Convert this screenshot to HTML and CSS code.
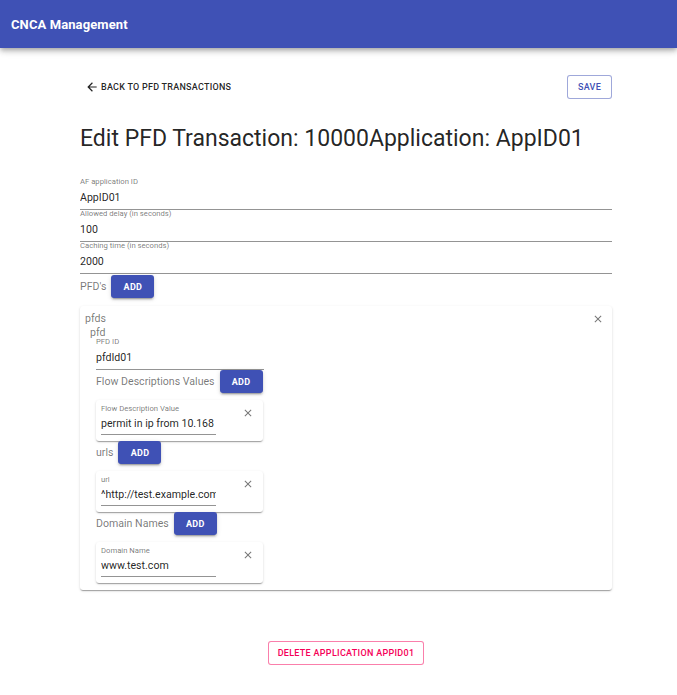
FILE: index.html
```html
<!DOCTYPE html>
<html>
<head>
<meta charset="utf-8">
<link rel="stylesheet" href="styles.css">
</head>
<body>
<header class="appbar"><span class="brand">CNCA Management</span></header>
<main class="content">
  <div class="toprow">
    <a class="back"><svg class="back-icon" viewBox="0 0 24 24"><path d="M20 11H7.83l5.59-5.59L12 4l-8 8 8 8 1.41-1.41L7.83 13H20v-2z"/></svg>BACK TO PFD TRANSACTIONS</a>
    <button class="btn-outlined save">SAVE</button>
  </div>
  <h1 class="title">Edit PFD Transaction: 10000Application: AppID01</h1>

  <div class="field"><div class="label">AF application ID</div><div class="value">AppID01</div></div>
  <div class="field"><div class="label">Allowed delay (in seconds)</div><div class="value">100</div></div>
  <div class="field"><div class="label">Caching time (in seconds)</div><div class="value">2000</div></div>

  <div class="addrow"><span class="addlabel">PFD's</span><button class="btn-add">ADD</button></div>

  <section class="card outer">
    <div class="card-head">
      <span class="section-title">pfds</span>
      <svg class="close" viewBox="0 0 24 24"><path d="M19 6.41 17.59 5 12 10.59 6.41 5 5 6.41 10.59 12 5 17.59 6.41 19 12 13.41 17.59 19 19 17.59 13.41 12z"/></svg>
    </div>
    <div class="pfd">
      <div class="section-title sub">pfd</div>
      <div class="pfd-body">
        <div class="field narrow"><div class="label">PFD ID</div><div class="value">pfdId01</div></div>

        <div class="addrow"><span class="addlabel">Flow Descriptions Values</span><button class="btn-add">ADD</button></div>
        <div class="card item">
          <div class="item-field">
            <div class="label">Flow Description Value</div>
            <div class="value">permit in ip from 10.168</div>
          </div>
          <svg class="close" viewBox="0 0 24 24"><path d="M19 6.41 17.59 5 12 10.59 6.41 5 5 6.41 10.59 12 5 17.59 6.41 19 12 13.41 17.59 19 19 17.59 13.41 12z"/></svg>
        </div>

        <div class="addrow"><span class="addlabel">urls</span><button class="btn-add">ADD</button></div>
        <div class="card item">
          <div class="item-field">
            <div class="label">url</div>
            <div class="value">^http://test.example.com</div>
          </div>
          <svg class="close" viewBox="0 0 24 24"><path d="M19 6.41 17.59 5 12 10.59 6.41 5 5 6.41 10.59 12 5 17.59 6.41 19 12 13.41 17.59 19 19 17.59 13.41 12z"/></svg>
        </div>

        <div class="addrow"><span class="addlabel">Domain Names</span><button class="btn-add">ADD</button></div>
        <div class="card item">
          <div class="item-field">
            <div class="label">Domain Name</div>
            <div class="value">www.test.com</div>
          </div>
          <svg class="close" viewBox="0 0 24 24"><path d="M19 6.41 17.59 5 12 10.59 6.41 5 5 6.41 10.59 12 5 17.59 6.41 19 12 13.41 17.59 19 19 17.59 13.41 12z"/></svg>
        </div>
      </div>
    </div>
  </section>

  <div class="delete-row"><button class="btn-outlined danger">DELETE APPLICATION APPID01</button></div>
</main>
</body>
</html>
```

FILE: styles.css
```css
* { box-sizing: border-box; }
body {
  margin: 0;
  font-family: Roboto, "Noto Sans", sans-serif;
  color: rgba(0,0,0,0.87);
  background: #fff;
}
.appbar {
  height: 48px;
  background: #3f51b5;
  display: flex;
  align-items: center;
  padding-left: 11px;
  box-shadow: 0 2px 4px -1px rgba(0,0,0,0.2), 0 4px 5px 0 rgba(0,0,0,0.14), 0 1px 10px 0 rgba(0,0,0,0.12);
}
.brand {
  color: #fff;
  font-weight: 700;
  font-size: 13px;
  letter-spacing: 0.1px;
}
.content {
  width: 532px;
  margin-left: 80px;
  padding-top: 27px;
}
.toprow {
  display: flex;
  justify-content: space-between;
  align-items: center;
  height: 24px;
}
.back {
  display: flex;
  align-items: center;
  font-size: 9px;
  font-weight: 500;
  letter-spacing: 0.25px;
  color: rgba(0,0,0,0.87);
  padding-left: 5px;
}
.back-icon { width: 14px; height: 14px; fill: rgba(0,0,0,0.87); margin-right: 2px; }
.btn-outlined {
  font-family: Roboto, sans-serif;
  font-size: 9px;
  font-weight: 500;
  letter-spacing: 0.3px;
  background: #fff;
  border-radius: 3px;
  height: 24px;
  cursor: pointer;
}
.save {
  width: 45px;
  color: #3f51b5;
  border: 1px solid rgba(63,81,181,0.5);
  padding: 0;
}
.title {
  margin: 25px 0 24px;
  font-size: 23px;
  font-weight: 400;
  line-height: 30px;
  letter-spacing: 0;
}
.label {
  font-size: 7.7px;
  line-height: 8px;
  color: rgba(0,0,0,0.54);
  white-space: nowrap;
}
.value {
  font-size: 10.6px;
  line-height: 13px;
  padding: 5px 0 5px;
  border-bottom: 1px solid #949494;
  white-space: nowrap;
  overflow: hidden;
}
.addrow {
  display: flex;
  align-items: center;
  gap: 5px;
  margin-top: 1px;
}
.addlabel {
  font-size: 10.6px;
  color: rgba(0,0,0,0.54);
  white-space: nowrap;
}
.btn-add {
  font-family: Roboto, sans-serif;
  height: 23px;
  width: 43px;
  flex: none;
  padding: 0;
  border: 0;
  border-radius: 3px;
  background: #3f51b5;
  color: #fff;
  font-size: 9px;
  font-weight: 700;
  letter-spacing: 0.3px;
  box-shadow: 0 3px 1px -2px rgba(0,0,0,0.2), 0 2px 2px 0 rgba(0,0,0,0.14), 0 1px 5px 0 rgba(0,0,0,0.12);
}
.card {
  background: #fff;
  border-radius: 3px;
  box-shadow: 0 2px 1px -1px rgba(0,0,0,0.2), 0 1px 1px 0 rgba(0,0,0,0.14), 0 1px 3px 0 rgba(0,0,0,0.12);
}
.outer {
  margin-top: 8px;
  padding: 6px 8px 7px 5px;
}
.card-head {
  display: flex;
  justify-content: space-between;
  align-items: center;
}
.section-title {
  font-size: 10.6px;
  line-height: 13px;
  color: rgba(0,0,0,0.54);
}
.close { width: 12px; height: 12px; fill: rgba(0,0,0,0.54); flex: none; }
.pfd { padding-left: 5px; margin-top: 2px; }
.section-title.sub { line-height: 11px; }
.pfd-body { padding-left: 6px; width: 180px; }
.pfd-body .addrow { margin-top: 0; }
.narrow .value { width: 168px; }
.item {
  margin: 7px 0 0;
  width: 167px;
  display: flex;
  justify-content: space-between;
  align-items: flex-start;
  padding: 4px 9px 6px 5px;
}
.item-field { width: 115px; }
.item .label { line-height: 9px; }
.item .value { padding: 4px 0 4px; }
.item .close { margin-top: 3px; }
.delete-row {
  display: flex;
  justify-content: center;
  margin-top: 51px;
}
.danger {
  color: #f50057;
  border: 1px solid rgba(245,0,87,0.5);
  padding: 0 9px;
}
```
